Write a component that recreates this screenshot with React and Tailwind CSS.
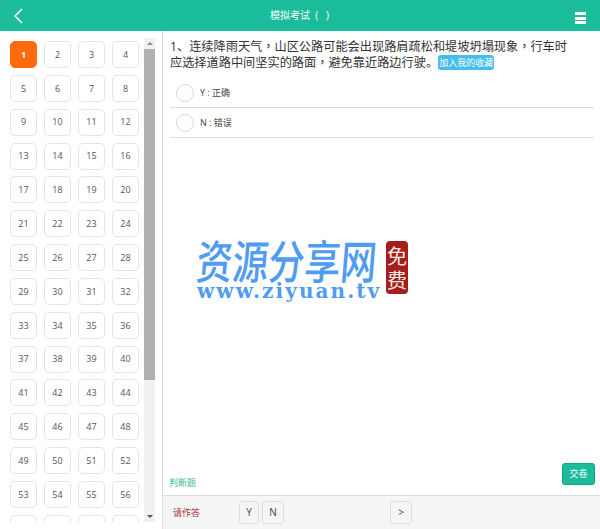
const cjk = "font-['Open_Sans','Noto_Sans_CJK_SC',sans-serif]";

function Tile({ n }) {
  const active = n === 1;
  return (
    <div
      className={
        active
          ? "w-[27px] h-[27px] shrink-0 rounded-[5px] flex items-center justify-center bg-[#ff6a0d] border border-[#ff6a0d] text-white font-bold text-[9px]"
          : "w-[27px] h-[27px] shrink-0 rounded-[5px] flex items-center justify-center bg-white border border-[#e4e4e4] text-[#555] text-[9px]"
      }
    >
      {n}
    </div>
  );
}

function Scrollbar() {
  return (
    <div className="w-[11px] h-[484px] bg-[#f1f1f1] flex flex-col shrink-0">
      <div className="h-[11px] flex items-center justify-center">
        <div className="w-0 h-0 border-x-[3px] border-x-transparent border-b-[3px] border-b-[#888]" />
      </div>
      <div className="h-[331px] bg-[#b0b0b0]" />
      <div className="flex-1" />
      <div className="h-[11px] flex items-center justify-center">
        <div className="w-0 h-0 border-x-[3px] border-x-transparent border-t-[3px] border-t-[#555]" />
      </div>
    </div>
  );
}

function Option({ label }) {
  return (
    <div className="h-[30px] flex items-center border-b border-[#dcdcdc] pl-[6px]">
      <div className="w-[18px] h-[18px] rounded-full border border-[#d8d8d8] bg-white" />
      <span className="ml-[6px] text-[9px] text-[#444]">{label}</span>
    </div>
  );
}

function AnswerBtn({ children, className }) {
  return (
    <div className={"h-[23px] flex items-center justify-center bg-[#f5f5f5] border border-[#dedede] rounded-[3px] text-[#444] text-[10px] " + className}>
      {children}
    </div>
  );
}

function Comma() {
  return <span className="font-['Noto_Sans_CJK_TC',sans-serif]">，</span>;
}

export default function App() {
  const nums = Array.from({ length: 60 }, (_, i) => i + 1);
  return (
    <div className={"relative w-[600px] h-[529px] overflow-hidden bg-white flex flex-col " + cjk}>
      <header className="h-[31px] shrink-0 bg-[#1abc9c] relative flex items-center">
        <svg className="ml-[13px]" width="11" height="16" viewBox="0 0 11 16" fill="none">
          <path d="M9 1 L2 8 L9 15" stroke="white" strokeWidth="1.6" />
        </svg>
        <span className="absolute left-[270px] top-[8px] text-[10px] leading-[15px] text-white whitespace-pre">{"模拟考试  (   )"}</span>
        <div className="ml-auto mr-[14px] mt-[5px] w-[11px] flex flex-col gap-[1.5px]">
          <div className="h-[3px] bg-white" />
          <div className="h-[3px] bg-white" />
          <div className="h-[3px] bg-white" />
        </div>
      </header>

      <div className="h-[498px] flex min-h-0">
        <aside className="w-[163px] shrink-0 border-r border-[#dcdcdc] pt-[7px] pl-[10px] flex gap-[5px]">
          <div className="w-[129px] h-[484px] overflow-hidden pt-[3px]">
            <div className="grid grid-cols-[repeat(4,27px)] gap-x-[7px] gap-y-[6.85px]">
              {nums.map((n) => (
                <Tile key={n} n={n} />
              ))}
            </div>
          </div>
          <Scrollbar />
        </aside>

        <main className="flex-1 flex flex-col min-w-0">
          <div className="flex-1 flex flex-col pl-[7px] pr-[6px] pt-[7px]">
            <div className="text-[12.2px] leading-[16px] text-[#333] whitespace-nowrap">
              <div className="h-[16px]">1、连续降雨天气<Comma />山区公路可能会出现路肩疏松和堤坡坍塌现象<Comma />行车时</div>
              <div className="h-[16px] flex items-center">
                <span>应选择道路中间坚实的路面<Comma />避免靠近路边行驶。</span>
                <span className="h-[15px] px-[1px] rounded-[3px] bg-[#44bdf0] text-white text-[9px] leading-[15px]">加入我的收藏</span>
              </div>
            </div>
            <div className="mt-[8px]">
              <Option label="Y : 正确" />
              <Option label="N : 错误" />
            </div>
            <div className="mt-auto flex items-end justify-between pb-[9px] ml-[-1px] mr-[-1px]">
              <span className="text-[9px] leading-[12px] text-[#3fb898] mb-[-2.5px]">判断题</span>
              <div className="w-[33px] h-[22px] mb-[1px] flex items-center justify-center bg-[#1abc9c] border border-[#16a085] rounded-[3px] text-white text-[9px]">交卷</div>
            </div>
          </div>
          <div className="h-[34px] shrink-0 bg-[#f5f5f5] border-t border-[#dcdcdc] flex items-center pl-[10px]">
            <span className="w-[66px] text-[9px] text-[#a83232]">请作答</span>
            <AnswerBtn className="w-[20px]">Y</AnswerBtn>
            <AnswerBtn className="w-[22px] ml-[3px]">N</AnswerBtn>
            <AnswerBtn className="w-[22px] ml-[106px]">&gt;</AnswerBtn>
          </div>
        </main>
      </div>

      {/* watermark overlay */}
      <div className="absolute left-[197px] top-[233px] w-[215px] h-[68px] pointer-events-none">
        <div className="absolute left-0 top-[2px] text-[36px] leading-[48px] font-medium text-[#4f9cf0] whitespace-nowrap scale-y-[1.28] -skew-x-6 font-['Noto_Sans_CJK_SC',sans-serif]">资源分享网</div>
        <div className="absolute left-0 top-[48px] text-[20px] leading-[20px] text-[#4f9cf0] whitespace-nowrap tracking-[2.1px] font-bold font-['DejaVu_Serif',serif]">www.ziyuan.tv</div>
        <div className="absolute left-[189px] top-[8px] w-[22px] h-[53px] rounded-[4px] bg-[#a51d1d] flex flex-col items-center justify-center text-[#f7e9e0] text-[20px] leading-[24px] font-['Noto_Sans_CJK_SC',sans-serif]">
          <span>免</span>
          <span>费</span>
        </div>
      </div>
    </div>
  );
}
